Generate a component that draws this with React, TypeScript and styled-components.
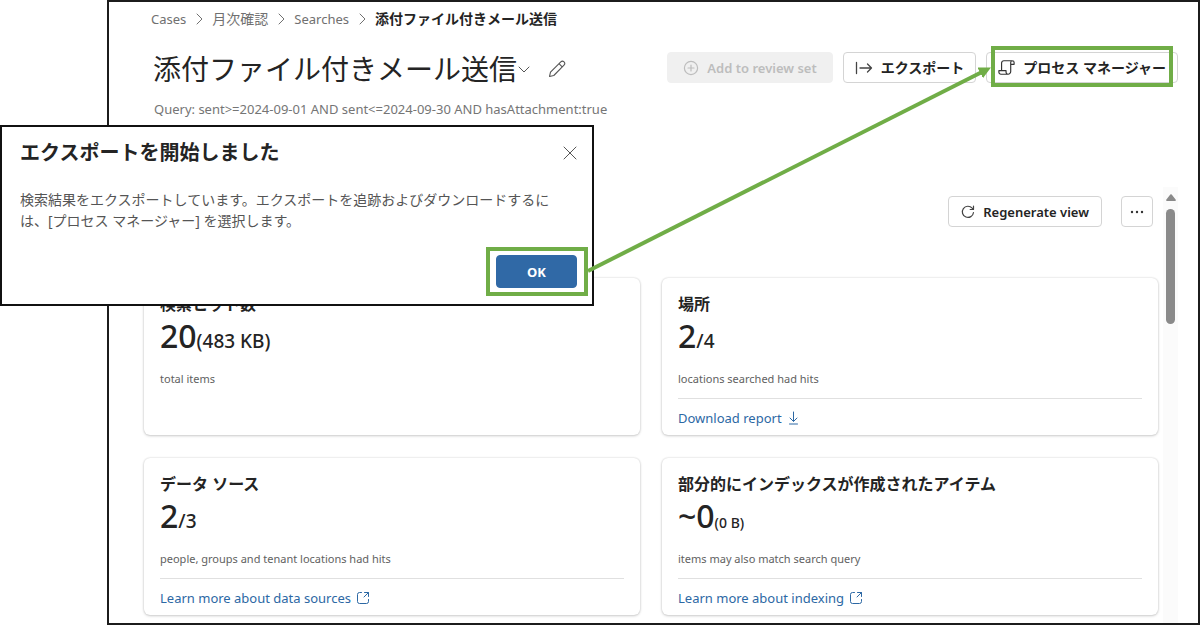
import React from "react";
import styled, { createGlobalStyle, css } from "styled-components";

const GlobalStyle = createGlobalStyle`
  *, *::before, *::after { box-sizing: border-box; }
  body {
    margin: 0;
    background: #fff;
    color: #242424;
    font-family: "Noto Sans", "Noto Sans CJK JP", sans-serif;
    font-size: 14px;
    line-height: 20px;
  }
  button { font: inherit; color: inherit; cursor: pointer; }
  h1, h2, p, ol { margin: 0; padding: 0; }
`;

const Page = styled.div`
  position: relative;
  display: flex;
  min-height: 100vh;
  padding-left: 107px;
`;

const Frame = styled.main`
  flex: 1;
  display: flex;
  flex-direction: column;
  min-width: 0;
  border: 2px solid #1c1c1c;
`;

const Header = styled.header`
  display: flex;
  flex-direction: column;
  padding: 7px 20px 0 42px;
`;

const Breadcrumb = styled.ol`
  display: flex;
  align-items: center;
  gap: 8px;
  list-style: none;
  font-size: 13px;
  color: #707070;
`;

const Crumb = styled.li`
  display: flex;
  align-items: center;
  gap: 9px;
  &[aria-current] { color: #242424; font-weight: 700; font-size: 14px; }
`;

const CrumbLink = styled.a<{ $large?: boolean }>`
  color: inherit;
  text-decoration: none;
  font-size: ${(p) => (p.$large ? 14 : 13)}px;
`;

const TitleRow = styled.div`
  display: flex;
  align-items: center;
  justify-content: space-between;
  margin-top: 18px;
`;

const TitleGroup = styled.div`
  display: flex;
  align-items: center;
  padding-left: 2px;
`;

const Title = styled.h1`
  font-size: 28px;
  line-height: 44px;
  font-weight: 400;
`;

const IconButton = styled.button`
  display: flex;
  padding: 0;
  border: 0;
  background: none;
  color: #555;
`;

const TitleActions = styled.div`
  display: flex;
  align-items: center;
  gap: 17px;
`;

const Toolbar = styled.div`
  display: flex;
  gap: 10px;
  margin-bottom: 3px;
`;

const Button = styled.button<{ $pad?: number }>`
  display: inline-flex;
  align-items: center;
  justify-content: center;
  gap: 8px;
  height: 31px;
  padding: 0 ${(p) => p.$pad ?? 11}px;
  border: 1px solid #d4d4d4;
  border-radius: 4px;
  background: #fff;
  font-size: 14px;
  font-weight: 700;
  white-space: nowrap;
  &:disabled { background: #f0f0f0; border-color: #f0f0f0; color: #bdbdbd; cursor: default; }
`;

const LatinLabel = styled.span`
  font-size: 13px;
  font-weight: 600;
`;

const highlight = css`
  content: "";
  position: absolute;
  border: 4px solid #70ad47;
  pointer-events: none;
`;

const HeaderTarget = styled.div`
  position: relative;
  display: flex;
  &::after { ${highlight} inset: -6px 5px -4px 5px; }
`;

const Query = styled.p`
  margin-top: 8px;
  padding-left: 3px;
  font-size: 13px;
  color: #757575;
`;

const Body = styled.section`
  flex: 1;
  display: flex;
  align-items: stretch;
  margin-top: 68px;
  padding: 0 20px 0 35px;
`;

const Content = styled.div`
  flex: 1;
  min-width: 0;
  padding: 9px 5px 8px 0;
`;

const ViewActions = styled.div`
  display: flex;
  justify-content: flex-end;
  gap: 19px;
  padding-right: 5px;
`;

const Cards = styled.div`
  display: grid;
  grid-template-columns: 1fr 1fr;
  gap: 23px 22px;
  margin-top: 51px;
`;

const Card = styled.article`
  display: flex;
  flex-direction: column;
  padding: 14px 16px 7px;
  border-radius: 6px;
  background: #fff;
  box-shadow: 0 0 2px rgba(0, 0, 0, 0.16), 0 1px 3px rgba(0, 0, 0, 0.18);
`;

const CardTitle = styled.h2`
  font-size: 16px;
  line-height: 24px;
  font-weight: 700;
`;

const Figure = styled.p`
  display: flex;
  align-items: baseline;
  height: 40px;
  font-size: 32px;
  line-height: 40px;
  font-weight: 500;
`;

const FigureNote = styled.span<{ $small?: boolean }>`
  font-size: ${(p) => (p.$small ? 14 : 19)}px;
  line-height: 20px;
`;

const Caption = styled.p`
  margin-top: 13px;
  font-size: 11px;
  color: #616161;
`;

const CardFooter = styled.div`
  margin-top: 9px;
  padding-top: 9px;
  border-top: 1px solid #e0e0e0;
`;

const CardLink = styled.a`
  display: inline-flex;
  align-items: center;
  gap: 5px;
  color: #2c68a4;
  font-size: 13px;
  text-decoration: none;
  vertical-align: top;
`;

const ScrollTrack = styled.div`
  display: flex;
  flex-direction: column;
  align-items: center;
  gap: 8px;
  width: 15px;
  padding-top: 7px;
  background: #fbfbfb;
`;

const ScrollThumb = styled.div`
  width: 9px;
  height: 115px;
  border-radius: 5px;
  background: #8a8a8a;
`;

const Dialog = styled.div`
  position: absolute;
  left: 0;
  top: 125px;
  width: 594px;
  display: flex;
  flex-direction: column;
  padding: 12px 15px 16px 18px;
  border: 2px solid #111;
  background: #fff;
`;

const DialogHead = styled.div`
  display: flex;
  align-items: center;
  justify-content: space-between;
`;

const DialogTitle = styled.h2`
  font-size: 20px;
  line-height: 28px;
  font-weight: 700;
`;

const DialogText = styled.p`
  margin-top: 22px;
  padding-right: 16px;
  line-height: 21px;
  color: #555;
`;

const DialogFoot = styled.div`
  display: flex;
  justify-content: flex-end;
  margin-top: 24px;
`;

const DialogTarget = styled.div`
  position: relative;
  display: flex;
  &::after { ${highlight} inset: -8px -11px -8px -10px; }
`;

const PrimaryButton = styled(Button)`
  width: 81px;
  height: 33px;
  border-color: #3069a6;
  background: #3069a6;
  color: #fff;
  font-size: 13px;
`;

const Connector = styled.svg`
  position: absolute;
  left: 588px;
  top: 72px;
  width: calc(100% - 806px);
  height: 199px;
  overflow: visible;
  pointer-events: none;
`;

const line = { fill: "none", stroke: "currentColor", strokeLinecap: "round", strokeLinejoin: "round" } as const;

const ChevronRight = () => (
  <svg width="9" height="14" viewBox="0 0 9 14" {...line}><path d="M2 2l5 5-5 5" /></svg>
);
const ChevronDown = () => (
  <svg width="14" height="14" viewBox="0 0 14 14" {...line}><path d="M2 5l5 5 5-5" /></svg>
);
const Pencil = () => (
  <svg width="18" height="18" viewBox="0 0 18 18" {...line} strokeWidth="1.1">
    <path d="M1.5 16.5l1-4.4L12.800 1.900a2.200 2.200 0 0 1 3.200 3.200L5.800 15.500z M11 3.700l3.200 3.200" />
  </svg>
);
const PlusCircle = () => (
  <svg width="16" height="16" viewBox="0 0 16 16" {...line} strokeWidth="1.2">
    <circle cx="8" cy="8" r="6.6" /><path d="M8 5v6M5 8h6" />
  </svg>
);
const ExportArrow = () => (
  <svg width="18" height="16" viewBox="0 0 18 16" {...line} stroke="#444" strokeWidth="1.3">
    <path d="M1.500 2.500v11M5 8h11.500M12.500 4l4 4-4 4" />
  </svg>
);
const Scroll = () => (
  <svg width="17" height="17" viewBox="0 0 19 18" {...line} stroke="#333" strokeWidth="1.3">
    <path d="M4 12V4a2.500 2.500 0 0 1 2.500-2.500h9.500A2 2 0 0 1 18 3.500V5.500h-3.800V3.500A2 2 0 0 1 16 1.500M14.200 5.500v8a3 3 0 0 1-3 3H3.300A2.300 2.300 0 0 1 1 14.200V12.500h8v1.500a2.300 2.300 0 0 0 2.300 2.500" />
  </svg>
);
const Refresh = () => (
  <svg width="14" height="14" viewBox="0 0 14 14" {...line} stroke="#444" strokeWidth="1.2">
    <path d="M12.500 7.500a5.600 5.600 0 1 1-1.300-4.300L12.300 4.400M12.500 1.200v3.300H9.200" />
  </svg>
);
const Dots = () => (
  <svg width="14" height="4" viewBox="0 0 14 4" fill="#333">
    <circle cx="2" cy="2" r="1.2" /><circle cx="7" cy="2" r="1.2" /><circle cx="12" cy="2" r="1.2" />
  </svg>
);
const Download = () => (
  <svg width="13" height="14" viewBox="0 0 13 14" {...line}><path d="M6.500 1v9M3 7l3.500 3.500L10 7M2.500 13h8" /></svg>
);
const External = () => (
  <svg width="14" height="14" viewBox="0 0 14 14" {...line}>
    <path d="M5.500 1.500h-2a2 2 0 0 0-2 2v7a2 2 0 0 0 2 2h7a2 2 0 0 0 2-2v-2M8.500 1.500h4v4M12.500 1.500L8 6" />
  </svg>
);
const Close = () => (
  <svg width="14" height="14" viewBox="0 0 14 14" {...line}><path d="M1 1l12 12M13 1L1 13" /></svg>
);
const ScrollUp = () => (
  <svg width="10" height="7" viewBox="0 0 10 7" fill="#8a8a8a">
    <path d="M4.300.5a1 1 0 0 1 1.400 0L9.600 5.500a.9.9 0 0 1-.7 1.500H1.100a.9.9 0 0 1-.7-1.500z" />
  </svg>
);

type Stat = {
  title: string;
  value: string;
  note: string;
  smallNote?: boolean;
  caption: string;
  link?: string;
  icon?: React.ReactNode;
};

const stats: Stat[] = [
  { title: "検索ヒット数", value: "20", note: "(483 KB)", caption: "total items" },
  { title: "場所", value: "2", note: "/4", caption: "locations searched had hits", link: "Download report", icon: <Download /> },
  { title: "データ ソース", value: "2", note: "/3", caption: "people, groups and tenant locations had hits", link: "Learn more about data sources", icon: <External /> },
  { title: "部分的にインデックスが作成されたアイテム", value: "~0", note: "(0 B)", smallNote: true, caption: "items may also match search query", link: "Learn more about indexing", icon: <External /> },
];

export default function App() {
  return (
    <Page>
      <GlobalStyle />
      <Frame>
        <Header>
          <nav aria-label="Breadcrumb">
            <Breadcrumb>
              <Crumb><CrumbLink href="#cases">Cases</CrumbLink><ChevronRight /></Crumb>
              <Crumb><CrumbLink $large href="#case">月次確認</CrumbLink><ChevronRight /></Crumb>
              <Crumb><CrumbLink href="#searches">Searches</CrumbLink><ChevronRight /></Crumb>
              <Crumb aria-current="page">添付ファイル付きメール送信</Crumb>
            </Breadcrumb>
          </nav>
          <TitleRow>
            <TitleGroup>
              <Title>添付ファイル付きメール送信</Title>
              <TitleActions>
                <IconButton aria-label="More searches"><ChevronDown /></IconButton>
                <IconButton aria-label="Edit name"><Pencil /></IconButton>
              </TitleActions>
            </TitleGroup>
            <Toolbar>
              <Button disabled $pad={15}><PlusCircle /><LatinLabel>Add to review set</LatinLabel></Button>
              <Button><ExportArrow />エクスポート</Button>
              <HeaderTarget>
                <Button><Scroll />プロセス マネージャー</Button>
              </HeaderTarget>
            </Toolbar>
          </TitleRow>
          <Query>Query: sent&gt;=2024-09-01 AND sent&lt;=2024-09-30 AND hasAttachment:true</Query>
        </Header>
        <Body>
          <Content>
            <ViewActions>
              <Button $pad={12}><Refresh /><LatinLabel>Regenerate view</LatinLabel></Button>
              <Button $pad={8} aria-label="More options"><Dots /></Button>
            </ViewActions>
            <Cards>
              {stats.map((s) => (
                <Card key={s.title}>
                  <CardTitle>{s.title}</CardTitle>
                  <Figure>{s.value}<FigureNote $small={s.smallNote}>{s.note}</FigureNote></Figure>
                  <Caption>{s.caption}</Caption>
                  {s.link && (
                    <CardFooter><CardLink href="#details">{s.link}{s.icon}</CardLink></CardFooter>
                  )}
                </Card>
              ))}
            </Cards>
          </Content>
          <ScrollTrack aria-hidden="true"><ScrollUp /><ScrollThumb /></ScrollTrack>
        </Body>
      </Frame>
      <Dialog role="dialog" aria-labelledby="dialog-title">
        <DialogHead>
          <DialogTitle id="dialog-title">エクスポートを開始しました</DialogTitle>
          <IconButton aria-label="Close"><Close /></IconButton>
        </DialogHead>
        <DialogText>
          検索結果をエクスポートしています。エクスポートを追跡およびダウンロードするには、[プロセス マネージャー] を選択します。
        </DialogText>
        <DialogFoot>
          <DialogTarget><PrimaryButton>OK</PrimaryButton></DialogTarget>
        </DialogFoot>
      </Dialog>
      <Connector aria-hidden="true">
        <defs>
          <marker id="arrowhead" markerUnits="userSpaceOnUse" markerWidth="12" markerHeight="12" refX="2" refY="6" orient="auto">
            <path d="M0 0l12 6-12 6z" fill="#70ad47" />
          </marker>
        </defs>
        <line x1="0" y1="100%" x2="100%" y2="0" stroke="#70ad47" strokeWidth="4" markerEnd="url(#arrowhead)" />
      </Connector>
    </Page>
  );
}
